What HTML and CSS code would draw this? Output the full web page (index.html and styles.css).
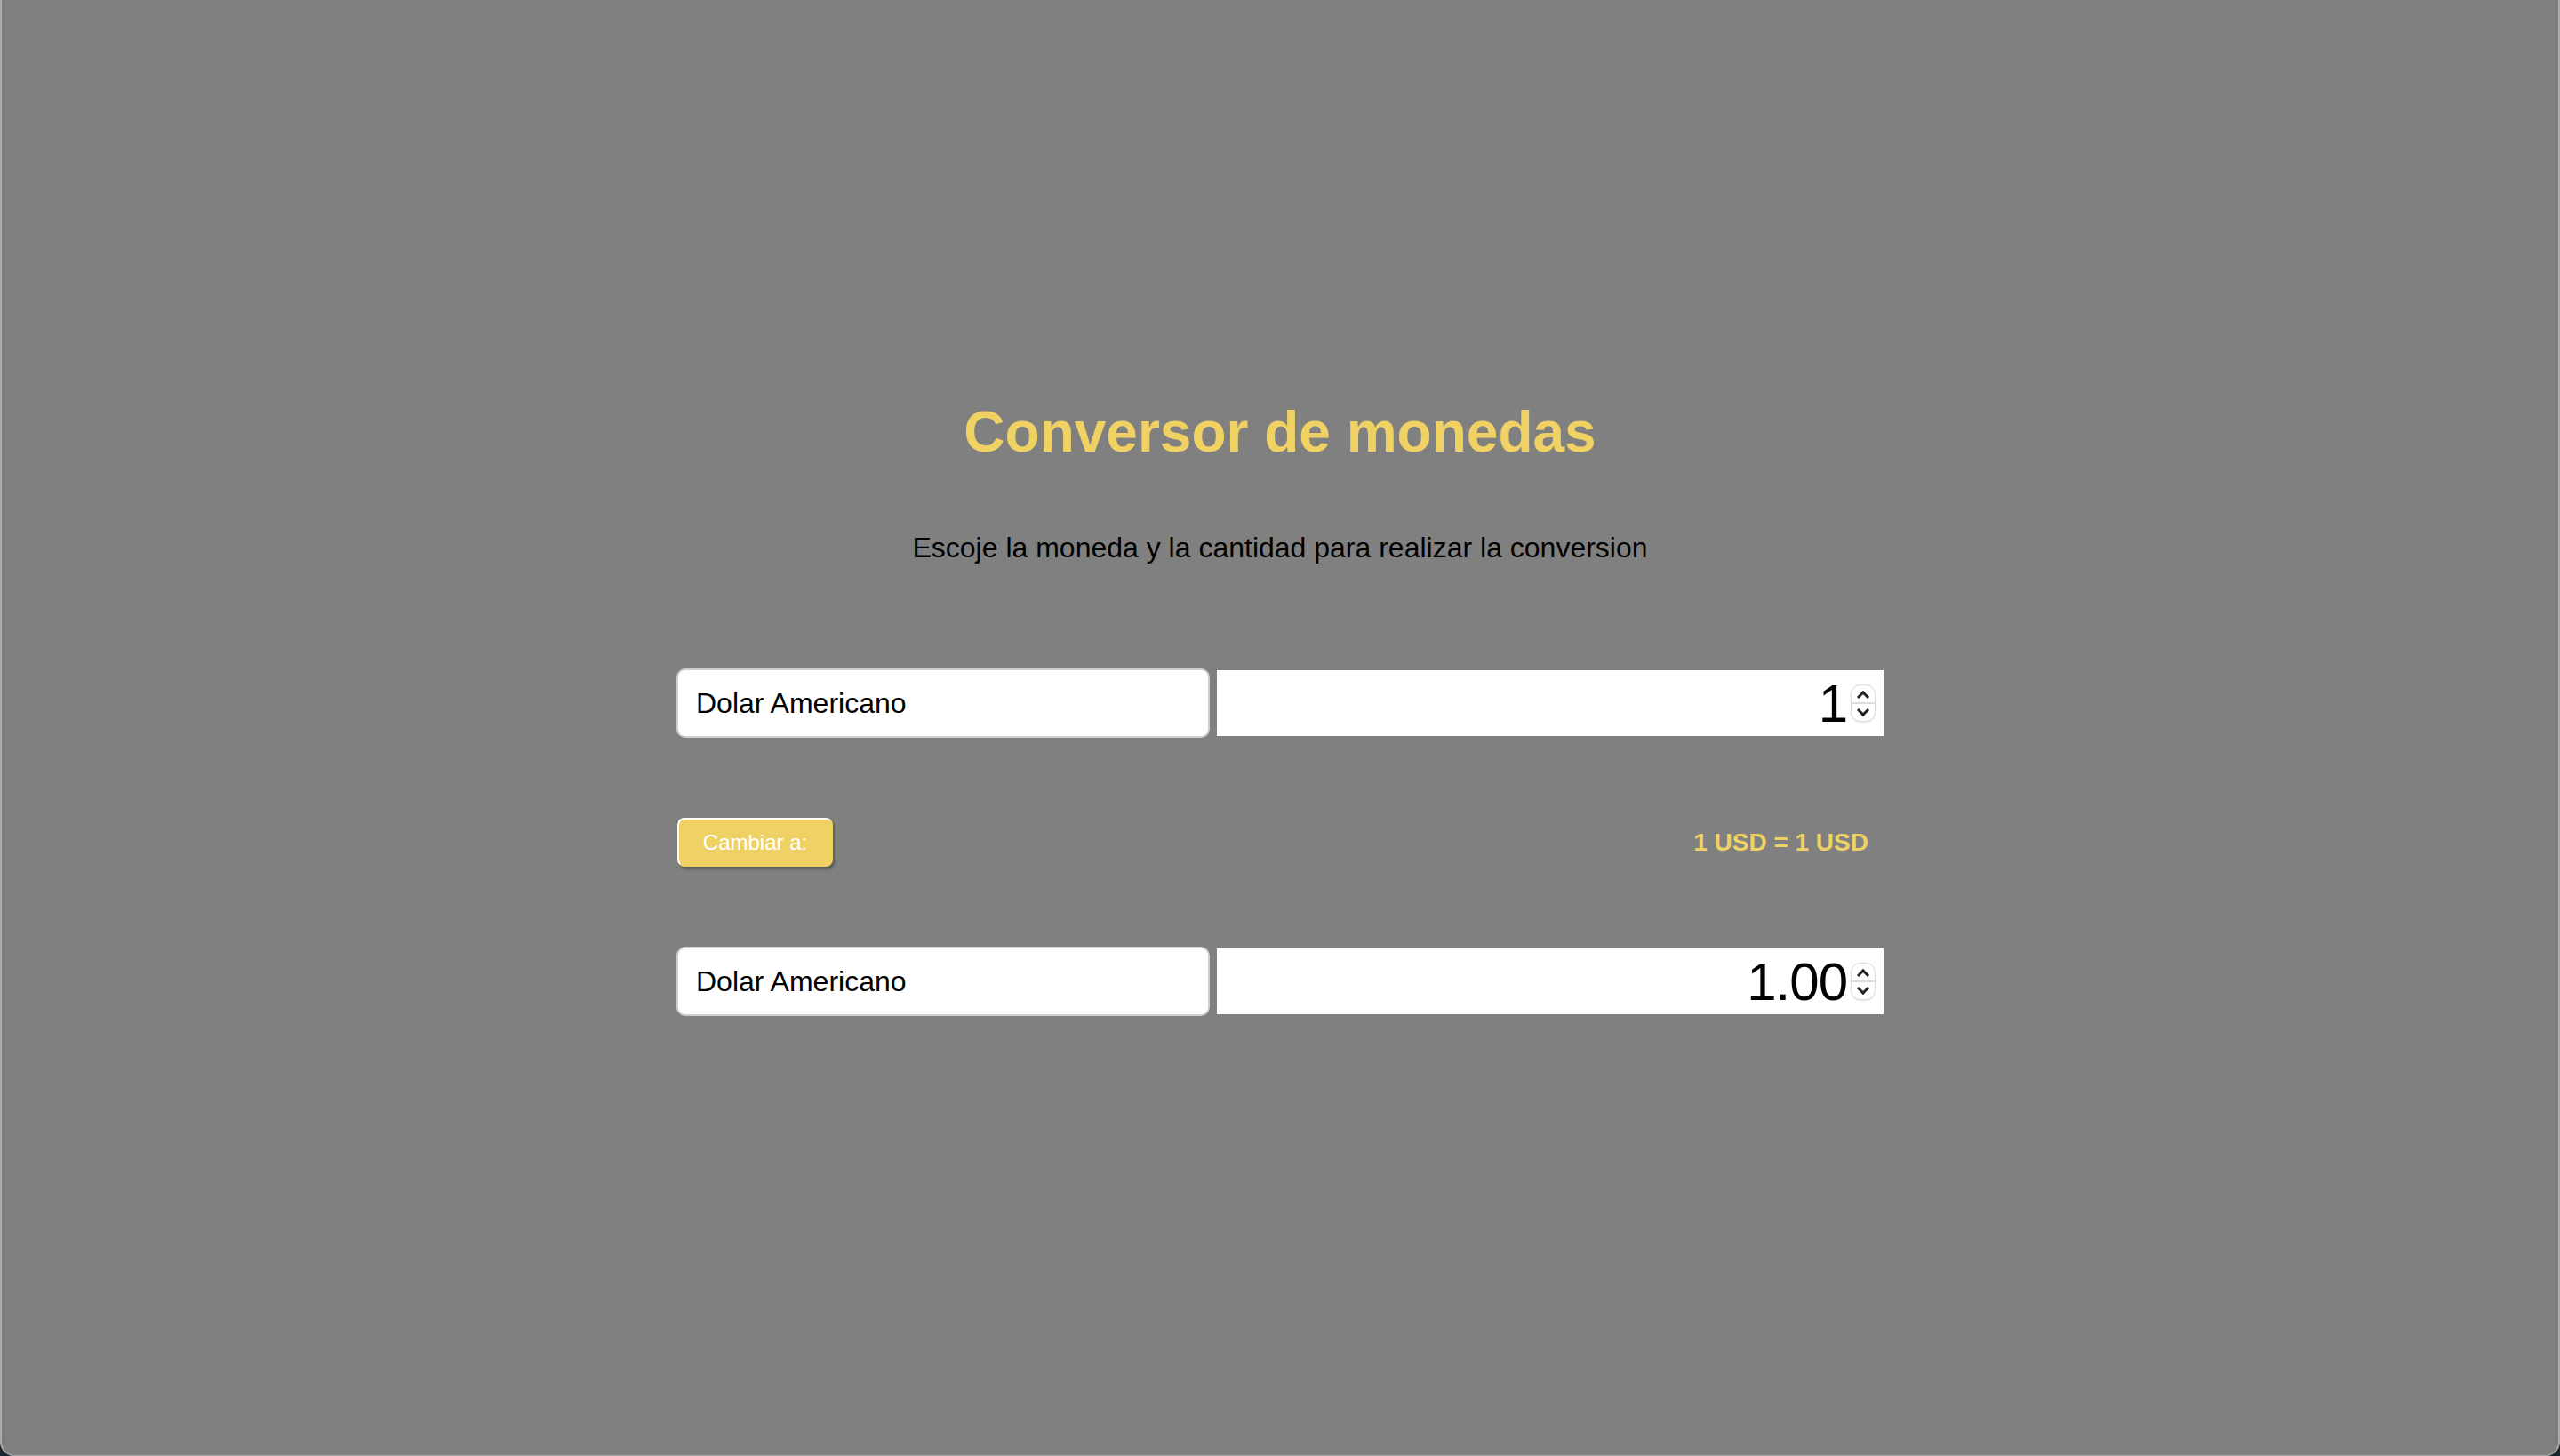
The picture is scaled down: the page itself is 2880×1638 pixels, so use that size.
FILE: index.html
```html
<!DOCTYPE html>
<html lang="es">
<head>
<meta charset="utf-8">
<title>Conversor de monedas</title>
<link rel="stylesheet" href="styles.css">
</head>
<body>
<div class="window">
  <main class="app">
    <h1 class="title">Conversor de monedas</h1>
    <p class="subtitle">Escoje la moneda y la cantidad para realizar la conversion</p>

    <div class="row">
      <select class="currency">
        <option>Dolar Americano</option>
      </select>
      <div class="amount-wrap">
        <input class="amount" type="number" value="1">
        <span class="spinner"><span class="chev up"></span><span class="chev down"></span></span>
      </div>
    </div>

    <div class="swap-row">
      <button class="swap">Cambiar a:</button>
      <span class="rate">1 USD = 1 USD</span>
    </div>

    <div class="row">
      <select class="currency">
        <option>Dolar Americano</option>
      </select>
      <div class="amount-wrap">
        <input class="amount" type="number" value="1.00">
        <span class="spinner"><span class="chev up"></span><span class="chev down"></span></span>
      </div>
    </div>
  </main>
</div>
</body>
</html>
```
FILE: styles.css
```css
html, body {
  margin: 0;
  padding: 0;
  background: #1b2831;
}

.window {
  box-sizing: border-box;
  height: 1638px;
  background: #808080;
  border-left: 2px solid #a9a9a9;
  border-right: 2px solid #a9a9a9;
  border-bottom: 1px solid #a9a9a9;
  border-radius: 0 0 16px 16px;
  padding-top: 449px;
  font-family: "Liberation Sans", Arial, sans-serif;
}

.app {
  width: 1358px;
  margin: 0 auto;
  display: flex;
  flex-direction: column;
}

.title {
  margin: 0;
  font-size: 64px;
  font-weight: bold;
  color: #f0d264;
  text-align: center;
  line-height: 74px;
}

.subtitle {
  margin: 75px 0 0;
  font-size: 32px;
  line-height: 37px;
  color: #000;
  text-align: center;
}

.row {
  display: flex;
  align-items: center;
  gap: 8px;
  margin-top: 117px;
}

.swap-row + .row {
  margin-top: 90px;
}

.currency {
  -webkit-appearance: none;
  appearance: none;
  box-sizing: border-box;
  width: 600px;
  height: 78px;
  margin: 0;
  padding: 0 20px;
  background: #fff;
  border: 2px solid #cfcfcf;
  border-radius: 10px;
  font-family: "Liberation Sans", Arial, sans-serif;
  font-size: 32px;
  color: #000;
}

.amount-wrap {
  position: relative;
  width: 750px;
  height: 74px;
}

.amount {
  box-sizing: border-box;
  width: 100%;
  height: 100%;
  margin: 0;
  padding: 0 41px 0 10px;
  border: none;
  background: #fff;
  text-align: right;
  font-family: "Liberation Sans", Arial, sans-serif;
  font-size: 60px;
  letter-spacing: -1px;
  color: #000;
  -moz-appearance: textfield;
}

.amount::-webkit-inner-spin-button,
.amount::-webkit-outer-spin-button {
  -webkit-appearance: none;
  margin: 0;
}

.spinner {
  position: absolute;
  right: 9px;
  top: 16px;
  box-sizing: border-box;
  width: 28px;
  height: 42px;
  border: 1px solid #dcdcdc;
  border-radius: 11px;
  background: #fff;
  box-shadow: 0 1px 2px rgba(0, 0, 0, 0.1);
  display: flex;
  flex-direction: column;
}

.chev {
  flex: 1;
  position: relative;
}

.chev.up {
  border-bottom: 2px solid #dedede;
}

.chev::before {
  content: "";
  position: absolute;
  left: 50%;
  top: 50%;
  width: 7px;
  height: 7px;
  border-left: 3px solid #222;
  border-top: 3px solid #222;
}

.chev.up::before {
  transform: translate(-50%, -20%) rotate(45deg);
}

.chev.down::before {
  transform: translate(-50%, -80%) rotate(-135deg);
}

.swap-row {
  display: flex;
  align-items: center;
  justify-content: space-between;
  margin-top: 90px;
  height: 55px;
}

.swap {
  box-sizing: border-box;
  width: 175px;
  height: 55px;
  margin: 0 0 0 1px;
  padding: 0;
  background: #f0d264;
  border: 2px solid;
  border-color: #ffffff #f0d264 #f0d264 #ffffff;
  border-radius: 8px;
  box-shadow: 2px 3px 3px rgba(0, 0, 0, 0.3);
  color: #fff;
  font-family: "Liberation Sans", Arial, sans-serif;
  font-size: 24px;
}

.rate {
  margin-right: 17px;
  font-size: 28px;
  font-weight: bold;
  color: #f0d264;
}
```
